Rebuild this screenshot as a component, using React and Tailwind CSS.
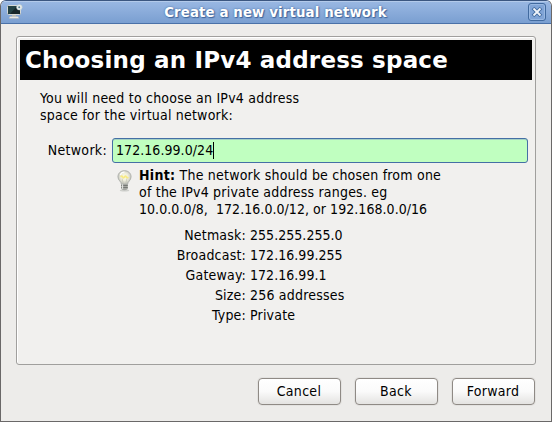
import React from "react";

const details = [
  ["Netmask:", "255.255.255.0"],
  ["Broadcast:", "172.16.99.255"],
  ["Gateway:", "172.16.99.1"],
  ["Size:", "256 addresses"],
  ["Type:", "Private"],
];

function MonitorIcon() {
  return (
    <svg width="16" height="16" viewBox="0 0 16 16" className="block">
      <rect x="0.5" y="1.5" width="13" height="9" rx="0.8" fill="#17272b" stroke="#d5d8d5" />
      <path d="M1 2h9L3 10H1z" fill="#2c5355" opacity=".6" />
      <path d="M5 11h4v2H5z" fill="#b9bdb8" />
      <path d="M3 12.5h8l1 1.8H2z" fill="#eeeeec" stroke="#b5b8b3" strokeWidth=".5" />
      <circle cx="12.4" cy="3.2" r="2.8" fill="#e6eae8" stroke="#b7c8cc" strokeWidth=".5" />
      <circle cx="12.2" cy="3.3" r="1" fill="#557f91" />
    </svg>
  );
}

function BulbIcon() {
  return (
    <svg width="15" height="22" viewBox="0 0 16 22" preserveAspectRatio="none" className="block">
      <defs>
        <radialGradient id="glass" cx=".5" cy=".45" r=".6">
          <stop offset="0" stopColor="#fffde0" />
          <stop offset=".45" stopColor="#efeedd" />
          <stop offset="1" stopColor="#b4b6b1" />
        </radialGradient>
      </defs>
      <ellipse cx="8" cy="20.5" rx="5" ry="1" fill="#b9bab6" opacity=".6" />
      <path
        d="M4.7 14.2C4.7 11.5 1 10.5 1 6.8 1 3.2 4 .7 8 .7s7 2.5 7 6.1c0 3.7-3.7 4.7-3.7 7.4z"
        fill="url(#glass)"
        stroke="#a9aba6"
        strokeWidth=".9"
      />
      <path d="M4 7q1-1.5 2 0t2 0 2 0 2 0" fill="none" stroke="#f7ea86" strokeWidth="1.8" />
      <path d="M5.5 8.5 6.7 14M10.5 8.5 9.3 14" stroke="#bdbdaf" strokeWidth=".6" />
      <path d="M3.5 5Q4.5 2 8 2" fill="none" stroke="#fff" strokeWidth="1.2" />
      <path d="M4.5 14h7v5q-3.5 2.5-7 0z" fill="#a5a7a2" />
      <path d="M4.5 15.5h7M4.5 17.5h7" stroke="#686a66" strokeWidth=".8" />
      <path d="M6 14.3v4.5" stroke="#eeeeec" />
    </svg>
  );
}

function Button({ children }) {
  return (
    <button className="h-[27px] w-[83px] rounded-[4px] border border-[#8f8a85] bg-linear-to-b from-white via-[#fafafa] to-[#e4e3e1] pr-px text-center leading-[25px] tracking-[0.3px] shadow-[0_0_0_1px_#e3e2e0]">
      {children}
    </button>
  );
}

export default function App() {
  return (
    <div className="h-[422px] w-[552px] bg-white font-['DejaVu_Sans_Condensed','DejaVu_Sans',sans-serif] text-[14px] leading-[17px] tracking-[0.21px] text-black">
      <div className="flex h-full w-full flex-col overflow-hidden rounded-t-[6px] border border-[#6a6868] border-t-[#3b5680] bg-[#edecea]">
        <header className="flex h-[23px] shrink-0 items-center border-b border-b-[#4a71a8] bg-linear-to-b from-[#9ab8e3] to-[#7a9fd1] pr-[5px] pl-[6px] shadow-[inset_0_1px_0_#b3caea]">
          <MonitorIcon />
          <h1 className="flex-1 text-center font-['DejaVu_Sans',sans-serif] text-[13.33px] font-bold tracking-[0.12px] text-white [text-shadow:0_0_2px_#3f659b,1px_1px_1px_#3f659b]">
            Create a new virtual network
          </h1>
          <button className="flex h-[18px] w-[18px] items-center justify-center rounded-[3px] border border-[#416a9f] bg-[#80a4d6] shadow-[inset_0_0_0_1px_#98b8e2]">
            <svg width="12" height="12" viewBox="0 0 12 12">
              <path d="m2 2 8 8m0-8-8 8" stroke="#416a9f" strokeWidth="3.8" />
              <path d="m2.5 2.5 7 7m0-7-7 7" stroke="#f0f4fa" strokeWidth="1.8" />
            </svg>
          </button>
        </header>
        <main className="mt-[12px] ml-[15px] h-[329px] w-[520px] shrink-0 rounded-[3px] border border-[#a09f9d] bg-[#f1f0ee] p-[3px] shadow-[inset_1px_1px_0_#fff]">
          <h2 className="h-[40px] w-[512px] bg-black pl-[5px] font-['DejaVu_Sans',sans-serif] text-[23px] leading-[40px] font-bold tracking-[0.19px] whitespace-nowrap text-white">
            Choosing an IPv4 address space
          </h2>
          <p className="mt-[10px] ml-[20px] whitespace-nowrap">
            You will need to choose an IPv4 address
            <br />
            space for the virtual network:
          </p>
          <div className="mt-[14px] flex h-[25px] items-center">
            <label className="w-[88px] pr-px text-right tracking-[0.3px]">Network:</label>
            <div className="ml-[4px] flex h-[25px] w-[416px] items-center rounded-[3px] border border-[#456fa5] bg-[#c0ffc0] pl-[3px] tracking-[0.06px] shadow-[inset_0_1px_0_#a5d2c4]">
              <span>172.16.99.0/24</span>
              <span className="h-[17px] w-px bg-black" />
            </div>
          </div>
          <div className="mt-[4px] ml-[97px] flex">
            <div className="mt-[3px] w-[22px]">
              <BulbIcon />
            </div>
            <p className="whitespace-pre">
              <b className="tracking-[0.3px]">Hint:</b> The network should be chosen from one
              {"\n"}of the IPv4 private address ranges. eg{"\n"}
              <span className="tracking-[0.05px]">
                10.0.0.0/8,{"  "}172.16.0.0/12, or 192.168.0.0/16
              </span>
            </p>
          </div>
          <dl className="mt-[7px] grid grid-cols-[226px_1fr] gap-x-[4px] leading-[20px]">
            {details.map(([name, value]) => (
              <React.Fragment key={name}>
                <dt className="text-right tracking-[0.2px]">{name}</dt>
                <dd className={/[a-z]/.test(value) ? "tracking-[0.2px]" : "tracking-[0.04px]"}>{value}</dd>
              </React.Fragment>
            ))}
          </dl>
        </main>
        <footer className="mt-[13px] flex justify-end gap-[14px] pr-[16px]">
          <Button>Cancel</Button>
          <Button>Back</Button>
          <Button>Forward</Button>
        </footer>
      </div>
    </div>
  );
}
